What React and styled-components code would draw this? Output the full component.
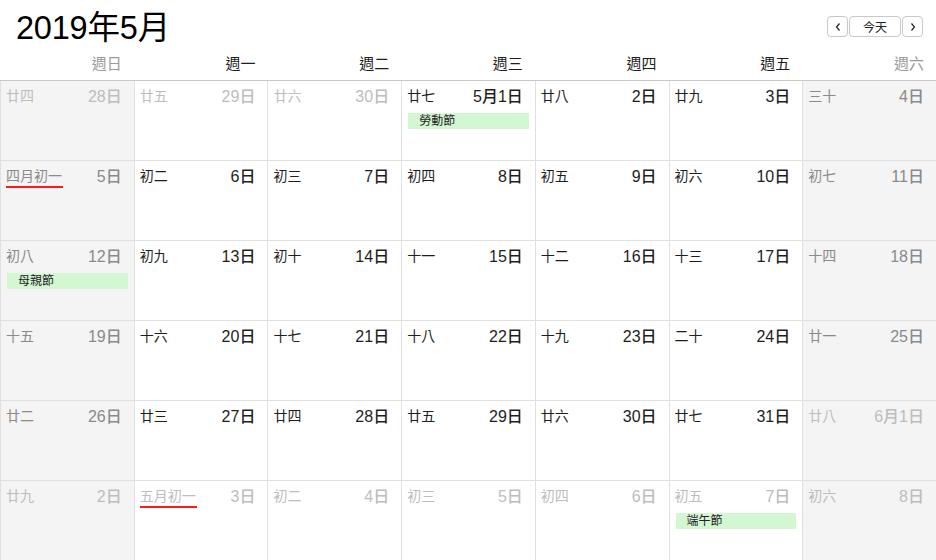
import React from 'react';
import styled, { createGlobalStyle } from 'styled-components';

const GlobalStyle = createGlobalStyle`
    html, body {
        margin: 0;
        padding: 0;
        background: #fff;
    }
    body {
        font-family: 'Liberation Sans', 'Noto Sans CJK TC', sans-serif;
        -webkit-font-smoothing: antialiased;
    }
`;

const weekdays = ['週日', '週一', '週二', '週三', '週四', '週五', '週六'];

// [date label, lunar label, in month?, event, new lunar month?]
const days = [
    ['28日', '廿四', false],
    ['29日', '廿五', false],
    ['30日', '廿六', false],
    ['5月1日', '廿七', true, '勞動節'],
    ['2日', '廿八', true],
    ['3日', '廿九', true],
    ['4日', '三十', true],
    ['5日', '四月初一', true, null, true],
    ['6日', '初二', true],
    ['7日', '初三', true],
    ['8日', '初四', true],
    ['9日', '初五', true],
    ['10日', '初六', true],
    ['11日', '初七', true],
    ['12日', '初八', true, '母親節'],
    ['13日', '初九', true],
    ['14日', '初十', true],
    ['15日', '十一', true],
    ['16日', '十二', true],
    ['17日', '十三', true],
    ['18日', '十四', true],
    ['19日', '十五', true],
    ['20日', '十六', true],
    ['21日', '十七', true],
    ['22日', '十八', true],
    ['23日', '十九', true],
    ['24日', '二十', true],
    ['25日', '廿一', true],
    ['26日', '廿二', true],
    ['27日', '廿三', true],
    ['28日', '廿四', true],
    ['29日', '廿五', true],
    ['30日', '廿六', true],
    ['31日', '廿七', true],
    ['6月1日', '廿八', false],
    ['2日', '廿九', false],
    ['3日', '五月初一', false, null, true],
    ['4日', '初二', false],
    ['5日', '初三', false],
    ['6日', '初四', false],
    ['7日', '初五', false, '端午節'],
    ['8日', '初六', false],
];

function tone(inMonth, weekend) {
    if (!inMonth) return 'faded';
    return weekend ? 'muted' : 'normal';
}

export default function App() {
    return (
        <Window>
            <GlobalStyle />
            <TopBar>
                <Title>2019年5月</Title>
                <NavGroup>
                    <NavButton>
                        <svg width="8" height="10" viewBox="0 0 8 10">
                            <path d="M5.5 1.5 L2.5 5 L5.5 8.5" fill="none" stroke="#222" strokeWidth="1.2" />
                        </svg>
                    </NavButton>
                    <NavButton $wide>今天</NavButton>
                    <NavButton>
                        <svg width="8" height="10" viewBox="0 0 8 10">
                            <path d="M2.5 1.5 L5.5 5 L2.5 8.5" fill="none" stroke="#222" strokeWidth="1.2" />
                        </svg>
                    </NavButton>
                </NavGroup>
            </TopBar>
            <WeekHeader>
                {weekdays.map((w, i) => (
                    <WeekName key={w} $weekend={i === 0 || i === 6}>
                        {w}
                    </WeekName>
                ))}
            </WeekHeader>
            <Grid>
                {days.map(([date, lunar, inMonth, event, newMonth], i) => {
                    const col = i % 7;
                    const weekend = col === 0 || col === 6;
                    const t = tone(inMonth, weekend);
                    return (
                        <Cell key={i} $weekend={weekend}>
                            <CellHead>
                                <LunarWrap>
                                    <Lunar $tone={t}>{lunar}</Lunar>
                                    {newMonth && <MonthMark />}
                                </LunarWrap>
                                <DateNum $tone={t}>{date}</DateNum>
                            </CellHead>
                            {event && <EventBar>{event}</EventBar>}
                        </Cell>
                    );
                })}
            </Grid>
        </Window>
    );
}

const colors = {
    normal: '#1e1e1e',
    muted: '#8a8a8a',
    faded: '#bdbdbd',
};

const Window = styled.div`
    width: 936px;
    height: 560px;
    overflow: hidden;
    background: #fff;
    display: flex;
    flex-direction: column;
`;

const TopBar = styled.header`
    height: 51px;
    flex: none;
    display: flex;
    justify-content: space-between;
    align-items: flex-start;
    padding: 0 13px 0 16px;
    box-sizing: border-box;
`;

const Title = styled.h1`
    margin: 8px 0 0;
    font-size: 32.5px;
    font-weight: 400;
    color: #000;
    line-height: 40px;
    letter-spacing: -0.2px;
`;

const NavGroup = styled.div`
    display: flex;
    gap: 1px;
    margin-top: 16px;
`;

const NavButton = styled.button`
    height: 21px;
    width: ${(p) => (p.$wide ? '52px' : '21px')};
    padding: 0;
    display: flex;
    align-items: center;
    justify-content: center;
    background: #fff;
    border: 1px solid #c9c9c9;
    border-radius: 4px;
    font-family: 'Liberation Sans', 'Noto Sans CJK TC', sans-serif;
    font-size: 12px;
    color: #222;
    box-sizing: border-box;
`;

const WeekHeader = styled.div`
    flex: none;
    height: 29px;
    display: grid;
    grid-template-columns: repeat(7, 1fr);
    gap: 1px;
    padding-left: 1px;
    border-bottom: 1px solid #c8c8c8;
`;

const WeekName = styled.div`
    text-align: right;
    padding-right: 12px;
    font-size: 15px;
    line-height: 26px;
    color: ${(p) => (p.$weekend ? '#9a9a9a' : '#1e1e1e')};
`;

const Grid = styled.div`
    flex: 1;
    display: grid;
    grid-template-columns: repeat(7, 1fr);
    grid-auto-rows: 79px;
    gap: 1px;
    padding-left: 1px;
    background: #e0e0e0;
`;

const Cell = styled.div`
    background: ${(p) => (p.$weekend ? '#f4f4f4' : '#fff')};
    padding: 6px 0 0;
    display: flex;
    flex-direction: column;
    min-width: 0;
`;

const CellHead = styled.div`
    display: flex;
    justify-content: space-between;
    align-items: flex-start;
    padding: 0 12px 0 5px;
    height: 20px;
`;

const LunarWrap = styled.div`
    display: flex;
    flex-direction: column;
`;

const Lunar = styled.span`
    font-size: 14px;
    line-height: 18px;
    color: ${(p) => colors[p.$tone]};
`;

const MonthMark = styled.div`
    height: 1.5px;
    margin: 1px -1px 0 0;
    background: #ff1a1a;
`;

const DateNum = styled.span`
    font-size: 16px;
    line-height: 20px;
    font-weight: 500;
    color: ${(p) => colors[p.$tone]};
`;

const EventBar = styled.div`
    margin: 6px 6px 0 6px;
    height: 16px;
    background: #d3f6d3;
    padding-left: 11px;
    font-size: 12px;
    line-height: 16px;
    color: #222;
`;
